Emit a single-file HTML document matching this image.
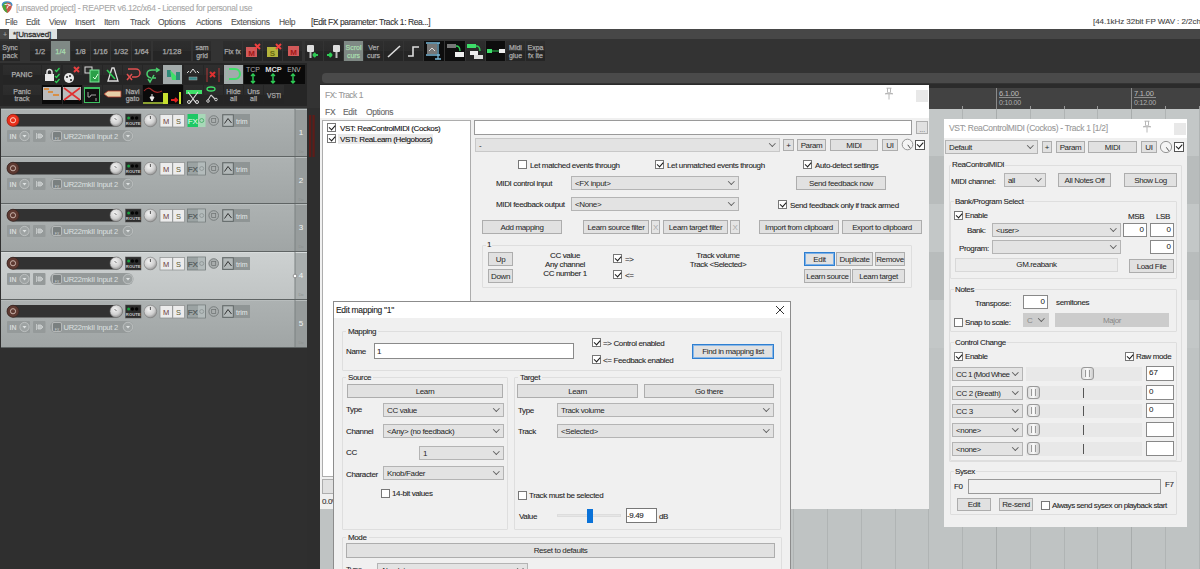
<!DOCTYPE html>
<html><head><meta charset="utf-8">
<style>
*{margin:0;padding:0;box-sizing:border-box}
html,body{width:1200px;height:569px;overflow:hidden;background:#2f2f2f;font-family:"Liberation Sans",sans-serif;position:relative}
div,span{position:absolute}
.t{font-size:8px;letter-spacing:-0.37px;line-height:11px;white-space:nowrap;color:#262626;-webkit-text-stroke-width:0.1px}
.btn{background:#e1e1e1;border:1px solid #adadad;font-size:8px;letter-spacing:-0.37px;line-height:13px;text-align:center;white-space:nowrap;color:#262626}
.dd{background:#e3e3e3;border:1px solid #b4b4b4;font-size:8px;letter-spacing:-0.37px;line-height:13.5px;white-space:nowrap;color:#262626;padding-left:3px}
.dd:after{content:"";position:absolute;right:4px;top:2.2px;width:3.6px;height:3.6px;border-right:1px solid #606060;border-bottom:1px solid #606060;transform:rotate(45deg)}
.cb{width:9px;height:9px;border:1px solid #777;background:#fff}
.cb.on:after{content:"";position:absolute;left:1px;top:1.2px;width:5px;height:2.6px;border-left:1.7px solid #1a1a1a;border-bottom:1.7px solid #1a1a1a;transform:rotate(-48deg)}
.gb{border:1px solid #dedede;border-radius:1px}
.tb{background:#fff;border:1px solid #7a7a7a}
.tbtn{background:#2b2b2b;color:#bdbdbd;font-size:8px;line-height:8px;text-align:center;letter-spacing:-0.2px}
.trk{background:linear-gradient(#aeb3b3,#a2a7a7)}
</style></head><body>

<!-- title + menu -->
<div style="left:0;top:0;width:1200px;height:29px;background:#fff"></div>
<svg style="position:absolute;left:1px;top:1px" width="12" height="13"><path d="M1.2 4.5 Q1.5 1 6 1 Q10.8 1 11 4.5 Q10.5 9 6.5 12 Q2 10 1.2 4.5Z" fill="#c8584a"/><path d="M1.2 4.5 Q1.5 1 6 1 Q4 4 5 7 Q6 10 6.5 12 Q2 10 1.2 4.5Z" fill="#46a83c"/><path d="M1.3 4.6 Q1.5 0.9 6 0.9 Q10.8 0.9 11 4.6" stroke="#3a8ec8" stroke-width="1.4" fill="none"/><path d="M3.5 3.6 Q7 2.6 9.5 4.2 Q6.2 4.2 6 7.5" stroke="#f4f4f4" stroke-width="0.9" fill="none"/></svg>
<span class="t" style="left:16px;top:3px;font-size:8.5px;letter-spacing:-0.3px;color:#a8a8a8">[unsaved project] - REAPER v6.12c/x64 - Licensed for personal use</span>
<span class="t" style="left:5px;top:17px;font-size:8.5px;letter-spacing:-0.3px;color:#555">File</span>
<span class="t" style="left:26px;top:17px;font-size:8.5px;letter-spacing:-0.3px;color:#555">Edit</span>
<span class="t" style="left:49px;top:17px;font-size:8.5px;letter-spacing:-0.3px;color:#555">View</span>
<span class="t" style="left:75px;top:17px;font-size:8.5px;letter-spacing:-0.3px;color:#555">Insert</span>
<span class="t" style="left:104px;top:17px;font-size:8.5px;letter-spacing:-0.3px;color:#555">Item</span>
<span class="t" style="left:130px;top:17px;font-size:8.5px;letter-spacing:-0.3px;color:#555">Track</span>
<span class="t" style="left:158px;top:17px;font-size:8.5px;letter-spacing:-0.3px;color:#555">Options</span>
<span class="t" style="left:196px;top:17px;font-size:8.5px;letter-spacing:-0.3px;color:#555">Actions</span>
<span class="t" style="left:231px;top:17px;font-size:8.5px;letter-spacing:-0.3px;color:#555">Extensions</span>
<span class="t" style="left:279px;top:17px;font-size:8.5px;letter-spacing:-0.3px;color:#555">Help</span>
<span class="t" style="left:311px;top:17px;font-size:8.5px;letter-spacing:-0.4px;color:#333">[Edit FX parameter: Track 1: Rea...]</span>
<span class="t" style="left:1093px;top:16px;font-size:8px;letter-spacing:-0.05px;color:#444">[44.1kHz 32bit FP WAV : 2/2ch</span>

<!-- tab band -->
<div style="left:0;top:29px;width:1200px;height:10px;background:#474747"></div>
<div style="left:9px;top:29px;width:48px;height:10px;background:#dfe2e2"></div>
<span class="t" style="left:13px;top:29px;font-size:8px;letter-spacing:-0.1px;color:#333;-webkit-text-stroke-width:0.3px">*[Unsaved]</span>
<span class="t" style="left:3px;top:28.5px;color:#aaa;font-size:7px">+</span>

<!-- toolbar area -->
<div style="left:0;top:39px;width:1200px;height:70px;background:#333"></div>
<div style="left:322px;top:73px;width:878px;height:10px;background:#4a4a4a;border-radius:4px 0 0 4px"></div>
<div style="left:320px;top:84px;width:880px;height:4px;background:#2b2b2b"></div>


<svg style="position:absolute;left:0;top:0" width="560" height="110" font-family="Liberation Sans"><defs><linearGradient id="tbg" x1="0" y1="0" x2="0" y2="1"><stop offset="0" stop-color="#2e2e2e"/><stop offset="0.5" stop-color="#2b2b2b"/><stop offset="0.5" stop-color="#252525"/><stop offset="1" stop-color="#252525"/></linearGradient></defs><rect x="0" y="63" width="307" height="43" fill="#262626"/><rect x="0" y="41" width="20" height="20" fill="url(#tbg)" /><text x="10.0" y="50" font-size="7" fill="#a8a8a8" stroke="#a8a8a8" stroke-width="0.25" text-anchor="middle" >Sync</text><text x="10.0" y="57.5" font-size="7" fill="#a8a8a8" stroke="#a8a8a8" stroke-width="0.25" text-anchor="middle" >pack</text><rect x="30" y="41" width="20" height="20" fill="url(#tbg)" /><text x="40.0" y="54" font-size="7.5" fill="#a8a8a8" stroke="#a8a8a8" stroke-width="0.25" text-anchor="middle" >1/2</text><rect x="51" y="41" width="19" height="20" fill="#7f8985" /><text x="60.5" y="54" font-size="7.5" fill="#a8dcae" stroke="#a8dcae" stroke-width="0.25" text-anchor="middle" >1/4</text><rect x="71" y="41" width="19" height="20" fill="url(#tbg)" /><text x="80.5" y="54" font-size="7.5" fill="#a8a8a8" stroke="#a8a8a8" stroke-width="0.25" text-anchor="middle" >1/8</text><rect x="91" y="41" width="19" height="20" fill="url(#tbg)" /><text x="100.5" y="54" font-size="7.5" fill="#a8a8a8" stroke="#a8a8a8" stroke-width="0.25" text-anchor="middle" >1/16</text><rect x="111" y="41" width="20" height="20" fill="url(#tbg)" /><text x="121.0" y="54" font-size="7.5" fill="#a8a8a8" stroke="#a8a8a8" stroke-width="0.25" text-anchor="middle" >1/32</text><rect x="132" y="41" width="19" height="20" fill="url(#tbg)" /><text x="141.5" y="54" font-size="7.5" fill="#a8a8a8" stroke="#a8a8a8" stroke-width="0.25" text-anchor="middle" >1/64</text><rect x="153" y="41" width="38" height="20" fill="url(#tbg)" /><text x="172.0" y="54" font-size="7.5" fill="#a8a8a8" stroke="#a8a8a8" stroke-width="0.25" text-anchor="middle" >1/128</text><rect x="193" y="41" width="18" height="20" fill="url(#tbg)" /><text x="202.0" y="50" font-size="7" fill="#a8a8a8" stroke="#a8a8a8" stroke-width="0.25" text-anchor="middle" >sam</text><text x="202.0" y="57.5" font-size="7" fill="#a8a8a8" stroke="#a8a8a8" stroke-width="0.25" text-anchor="middle" >grid</text><rect x="223" y="41" width="19" height="20" fill="url(#tbg)" /><text x="232.5" y="54" font-size="7" fill="#a8a8a8" stroke="#a8a8a8" stroke-width="0.25" text-anchor="middle" >Fix fx</text><rect x="243" y="41" width="19" height="20" fill="url(#tbg)" /><rect x="263" y="41" width="19" height="20" fill="url(#tbg)" /><rect x="283" y="41" width="19" height="20" fill="url(#tbg)" /><rect x="305" y="41" width="18" height="20" fill="url(#tbg)" /><rect x="324" y="41" width="19" height="20" fill="url(#tbg)" /><rect x="344" y="41" width="19" height="20" fill="#7f8985" /><text x="353.5" y="50" font-size="7" fill="#a8dcae" stroke="#a8dcae" stroke-width="0.25" text-anchor="middle" >Scrol</text><text x="353.5" y="57.5" font-size="7" fill="#a8dcae" stroke="#a8dcae" stroke-width="0.25" text-anchor="middle" >curs</text><rect x="364" y="41" width="19" height="20" fill="url(#tbg)" /><text x="373.5" y="50" font-size="7" fill="#a8a8a8" stroke="#a8a8a8" stroke-width="0.25" text-anchor="middle" >Ver</text><text x="373.5" y="57.5" font-size="7" fill="#a8a8a8" stroke="#a8a8a8" stroke-width="0.25" text-anchor="middle" >curs</text><rect x="384" y="41" width="19" height="20" fill="url(#tbg)" /><rect x="404" y="41" width="19" height="20" fill="url(#tbg)" /><rect x="424" y="41" width="20" height="20" fill="#0d0d0d" /><rect x="445" y="41" width="20" height="20" fill="#0d0d0d" /><rect x="466" y="41" width="19" height="20" fill="url(#tbg)" /><rect x="486" y="41" width="19" height="20" fill="#0d0d0d" /><rect x="506" y="41" width="19" height="20" fill="url(#tbg)" /><text x="515.5" y="50" font-size="7" fill="#a8a8a8" stroke="#a8a8a8" stroke-width="0.25" text-anchor="middle" >Midi</text><text x="515.5" y="57.5" font-size="7" fill="#a8a8a8" stroke="#a8a8a8" stroke-width="0.25" text-anchor="middle" >glue</text><rect x="526" y="41" width="19" height="20" fill="url(#tbg)" /><text x="535.5" y="50" font-size="7" fill="#a8a8a8" stroke="#a8a8a8" stroke-width="0.25" text-anchor="middle" >Expa</text><text x="535.5" y="57.5" font-size="7" fill="#a8a8a8" stroke="#a8a8a8" stroke-width="0.25" text-anchor="middle" >fx ite</text><rect x="3" y="65" width="38" height="19" fill="url(#tbg)" /><text x="22.0" y="76.5" font-size="7" fill="#b0b0b0" stroke="#b0b0b0" stroke-width="0.25" text-anchor="middle" >PANIC</text><rect x="42" y="65" width="19" height="19" fill="url(#tbg)" /><rect x="63" y="65" width="19" height="19" fill="url(#tbg)" /><rect x="83" y="65" width="19" height="19" fill="url(#tbg)" /><rect x="103" y="65" width="19" height="19" fill="url(#tbg)" /><rect x="123" y="65" width="19" height="19" fill="url(#tbg)" /><rect x="143" y="65" width="19" height="19" fill="url(#tbg)" /><rect x="163" y="65" width="19" height="19" fill="#a3abab" /><rect x="184" y="65" width="19" height="19" fill="url(#tbg)" /><rect x="204" y="65" width="19" height="19" fill="url(#tbg)" /><rect x="224" y="65" width="19" height="19" fill="#a3abab" /><rect x="244" y="65" width="61" height="19" fill="#0a0a0a" /><rect x="3" y="85" width="38" height="19" fill="url(#tbg)" /><text x="22.0" y="93.5" font-size="7" fill="#a8a8a8" stroke="#a8a8a8" stroke-width="0.25" text-anchor="middle" >Panic</text><text x="22.0" y="101" font-size="7" fill="#a8a8a8" stroke="#a8a8a8" stroke-width="0.25" text-anchor="middle" >track</text><rect x="42" y="85" width="20" height="19" fill="#0a0a0a" /><rect x="63" y="85" width="19" height="19" fill="#0a0a0a" /><rect x="83" y="85" width="19" height="19" fill="url(#tbg)" /><rect x="103" y="85" width="19" height="19" fill="url(#tbg)" /><rect x="123" y="85" width="19" height="19" fill="url(#tbg)" /><text x="132.5" y="93.5" font-size="7" fill="#a8a8a8" stroke="#a8a8a8" stroke-width="0.25" text-anchor="middle" >Navi</text><text x="132.5" y="101" font-size="7" fill="#a8a8a8" stroke="#a8a8a8" stroke-width="0.25" text-anchor="middle" >gato</text><rect x="143" y="85" width="20" height="19" fill="#0a0a0a" /><rect x="163" y="85" width="20" height="19" fill="#0a0a0a" /><rect x="184" y="85" width="19" height="19" fill="url(#tbg)" /><rect x="204" y="85" width="19" height="19" fill="url(#tbg)" /><rect x="224" y="85" width="19" height="19" fill="url(#tbg)" /><text x="233.5" y="93.5" font-size="7" fill="#a8a8a8" stroke="#a8a8a8" stroke-width="0.25" text-anchor="middle" >Hide</text><text x="233.5" y="101" font-size="7" fill="#a8a8a8" stroke="#a8a8a8" stroke-width="0.25" text-anchor="middle" >all</text><rect x="244" y="85" width="19" height="19" fill="url(#tbg)" /><text x="253.5" y="93.5" font-size="7" fill="#a8a8a8" stroke="#a8a8a8" stroke-width="0.25" text-anchor="middle" >Uns</text><text x="253.5" y="101" font-size="7" fill="#a8a8a8" stroke="#a8a8a8" stroke-width="0.25" text-anchor="middle" >all</text><rect x="264" y="85" width="20" height="19" fill="url(#tbg)" /><text x="274.0" y="97.5" font-size="6.5" fill="#a8a8a8" stroke="#a8a8a8" stroke-width="0.25" text-anchor="middle" >VSTi</text>
<!-- row1 icons -->
<rect x="246" y="47" width="11" height="10" fill="#d25a5a"/><text x="251.5" y="55.5" font-size="8" fill="#a01818" text-anchor="middle" font-weight="bold">M</text>
<path d="M255 44 l5 5 M260 44 l-5 5" stroke="#f04040" stroke-width="2"/>
<rect x="267" y="47" width="11" height="10" fill="#b4b43c"/><text x="272.5" y="55.5" font-size="8" fill="#6a6a10" text-anchor="middle" font-weight="bold">S</text>
<path d="M276 44 l5 5 M281 44 l-5 5" stroke="#f04040" stroke-width="2"/>
<rect x="288" y="46" width="11" height="10" fill="#d25a5a"/><text x="293.5" y="54.5" font-size="8" fill="#a01818" text-anchor="middle" font-weight="bold">M</text>
<rect x="307" y="45" width="7" height="7" fill="#ddd" rx="1"/><rect x="309.5" y="52" width="2" height="6" fill="#bbb"/><path d="M313 55 h5 M313 55 l2.5 -2 M313 55 l2.5 2" stroke="#2ecc55" stroke-width="2"/>
<rect x="333" y="45" width="7" height="7" fill="#ddd" rx="1"/><rect x="335.5" y="52" width="2" height="6" fill="#bbb"/><path d="M327 55 h5 M332 55 l-2.5 -2 M332 55 l-2.5 2" stroke="#2ecc55" stroke-width="2"/>
<path d="M388 57 L400 46" stroke="#ddd" stroke-width="1.6"/>
<path d="M408 56 h5 v-9 h6" stroke="#ddd" stroke-width="1.6" fill="none"/>
<rect x="427" y="44" width="10" height="10" fill="#777"/><path d="M429 51 l3 -3 l3 3" stroke="#ddd" fill="none"/><path d="M426 43 h14 M426 55 h14 M438 43 v16 M435 59 h6" stroke="#7ab8d8" stroke-width="1.3" fill="none"/>
<rect x="447" y="44" width="9" height="4" fill="#777"/><rect x="455" y="52" width="9" height="5" fill="#eee"/><path d="M456 46 q4 0 4 5" stroke="#2ecc55" stroke-width="1.3" fill="none"/>
<rect x="467" y="44" width="9" height="4" fill="#3ede6a"/><rect x="470" y="51" width="8" height="4" fill="#eee"/><rect x="474" y="55" width="9" height="4" fill="#ddd"/><path d="M476 46 q4 0 4 5" stroke="#2ecc55" stroke-width="1.3" fill="none"/>
<rect x="487" y="49" width="5" height="4" fill="#3ede6a"/><path d="M492 51 h7" stroke="#2ecc55"/><rect x="499" y="49" width="6" height="4" fill="#eee"/>
<!-- row2 icons -->
<rect x="45" y="74" width="9" height="7" fill="#e8e8e8"/><path d="M47 74 v-2 a2.5 2.5 0 0 1 5 0 v2" stroke="#e8e8e8" stroke-width="1.5" fill="none"/>
<path d="M55 70 l1.5 1.5 l3 -3.5 M55 76 l1.5 1.5 l3 -3.5 M55 81 l1.5 1.5 l3 -3.5" stroke="#2ecc55" stroke-width="1.3" fill="none"/>
<circle cx="69" cy="78" r="5" fill="#e8e8e8"/><circle cx="67" cy="77" r="1" fill="#222"/><circle cx="70" cy="76" r="1" fill="#222"/><circle cx="71" cy="80" r="1" fill="#222"/>
<path d="M74 67 l5 5 M79 67 l-5 5" stroke="#e84040" stroke-width="2"/>
<rect x="85" y="67" width="7" height="6" fill="none" stroke="#ddd"/><rect x="90" y="70" width="9" height="12" fill="#2aa048" stroke="#7de89a"/><path d="M93 77 l2 2 l3 -5" stroke="#dfd" fill="none"/>
<path d="M108 81 l4 -13 h2 l4 13 z" fill="none" stroke="#ddd" stroke-width="1.3"/><path d="M107 70 l8 9" stroke="#2ecc55" stroke-width="1.6"/>
<path d="M128 69 h8 a4 4 0 0 1 0 8 h-4" stroke="#e05050" stroke-width="1.5" fill="none"/><path d="M127 74 l5 6 M132 74 l-5 6" stroke="#e05050" stroke-width="1.5"/>
<path d="M159 70 h-7 q-5 0 -5 4 q0 3 4 4 M156 68 l3 2 l-3 2 M148 79 l2 3 l4 -7 M153 78 h3" stroke="#4ad06e" stroke-width="1.5" fill="none"/>
<rect x="167" y="70" width="4" height="7" fill="#2f8a7a"/><rect x="176" y="72" width="4" height="8" fill="#2f8a7a"/><path d="M170 70 l6 6 v4 h-4 z" fill="#3ee068"/>
<path d="M187 73 l2 -2 M199 73 l-2 -2 M190 73 l3 -4 l3 4" stroke="#ddd" fill="none"/><rect x="189" y="77" width="8" height="3" fill="#3a8a8a" stroke="#aaa" stroke-width="0.5"/>
<path d="M207 68 v14 M219 68 v14" stroke="#b03838" stroke-width="1"/><path d="M210 72 l5 5 M215 72 l-5 5" stroke="#e03030" stroke-width="2"/>
<path d="M229 69 h6 a5 5 0 0 1 0 10 h-6" stroke="#3ee068" stroke-width="2" fill="none"/><path d="M227 68 v13" stroke="#8ac8a0" stroke-dasharray="1 1"/>
<text x="253" y="72" font-size="7" fill="#aaa" text-anchor="middle">TCP</text><text x="273.5" y="72" font-size="7.5" fill="#ddd" text-anchor="middle" font-weight="bold">MCP</text><text x="294" y="72" font-size="6.5" fill="#bbb" text-anchor="middle">ENV</text>
<path d="M253 74 v9 M251 76 l2 -2 l2 2 M251 81 l2 2 l2 -2" stroke="#2ecc55" stroke-width="1.4" fill="none"/>
<path d="M273 74 v9 M271 76 l2 -2 l2 2 M271 81 l2 2 l2 -2" stroke="#2ecc55" stroke-width="1.4" fill="none"/>
<path d="M293 74 v9 M291 76 l2 -2 l2 2 M291 81 l2 2 l2 -2" stroke="#2ecc55" stroke-width="1.4" fill="none"/>
<!-- row3 icons -->
<rect x="43" y="87" width="18" height="13" fill="#bcbcbc"/><path d="M44 89 h5 M48 92 h5 M53 95 h6 M50 92 h3" stroke="#e08020" stroke-width="1.3"/>
<rect x="63" y="87" width="18" height="13" fill="#bcbcbc"/><path d="M64 88 l16 12 M80 88 l-16 12" stroke="#e03030" stroke-width="1.6"/>
<rect x="84.5" y="87.5" width="15" height="15" fill="#111" stroke="#3ec060"/><rect x="85" y="87" width="15" height="2" fill="#3ec060"/><path d="M88 92 v5 h2 l1 -2 h5 M96 98 v3" stroke="#ccc" stroke-width="0.8" fill="none"/>
<path d="M104 94 l4 -3 h13 v6 h-13 z" fill="#e8d0a8" stroke="#b03828" stroke-width="0.8"/>
<path d="M144 91 q4 -5 8 -1 t10 1" stroke="#a02828" stroke-width="1.2" fill="none"/><path d="M150 97 l2 4 l2 -4 z M152 94 v3" fill="#eee" stroke="#eee"/><rect x="143" y="102" width="20" height="2" fill="#8aa030"/>
<rect x="163" y="93" width="5" height="11" fill="#c8e030"/><path d="M171 100 h6 M175 98 l2 2 l-2 2" stroke="#e02020" stroke-width="2" fill="none"/><rect x="179" y="92" width="2" height="12" fill="#c8e030"/>
<rect x="186" y="90" width="16" height="4" fill="#3ee068"/><path d="M190 103 l8 -11 M196 103 l-8 -11" stroke="#ddd" stroke-width="1.1"/><circle cx="189" cy="102" r="1.5" fill="none" stroke="#ddd"/><circle cx="197" cy="102" r="1.5" fill="none" stroke="#ddd"/>
<ellipse cx="211" cy="89" rx="4" ry="2" fill="none" stroke="#3ee068" stroke-width="1.3"/><path d="M211 95 l-3 5 M211 95 l4 4" stroke="#ccc" stroke-width="1.1"/><circle cx="208" cy="101" r="1.3" fill="none" stroke="#ccc"/><circle cx="216" cy="99.5" r="1.3" fill="none" stroke="#ccc"/>
</svg>
<!-- arrange bg -->
<svg style="position:absolute;left:0;top:0" width="1200" height="569" font-family="Liberation Sans"><rect x="320" y="88" width="880" height="21" fill="#424242"/><rect x="320" y="109" width="880" height="47" fill="#c3c7c7"/><rect x="320" y="156" width="880" height="48" fill="#b8bcbc"/><rect x="320" y="204" width="880" height="48" fill="#c3c7c7"/><rect x="320" y="252" width="880" height="48" fill="#b8bcbc"/><rect x="320" y="300" width="880" height="48" fill="#c3c7c7"/><rect x="320" y="348" width="880" height="221" fill="#bfc3c3"/><rect x="354" y="109" width="1" height="460" fill="#b0b4b4"/><rect x="354" y="106" width="1" height="3" fill="#999"/><rect x="388" y="109" width="1" height="460" fill="#b0b4b4"/><rect x="388" y="106" width="1" height="3" fill="#999"/><rect x="421" y="109" width="1" height="460" fill="#b0b4b4"/><rect x="421" y="106" width="1" height="3" fill="#999"/><rect x="455" y="109" width="1" height="460" fill="#b0b4b4"/><rect x="455" y="106" width="1" height="3" fill="#999"/><rect x="489" y="109" width="1" height="460" fill="#b0b4b4"/><rect x="489" y="106" width="1" height="3" fill="#999"/><rect x="523" y="109" width="1" height="460" fill="#b0b4b4"/><rect x="523" y="106" width="1" height="3" fill="#999"/><rect x="557" y="109" width="1" height="460" fill="#b0b4b4"/><rect x="557" y="106" width="1" height="3" fill="#999"/><rect x="590" y="109" width="1" height="460" fill="#b0b4b4"/><rect x="590" y="106" width="1" height="3" fill="#999"/><rect x="624" y="109" width="1" height="460" fill="#b0b4b4"/><rect x="624" y="106" width="1" height="3" fill="#999"/><rect x="658" y="109" width="1" height="460" fill="#b0b4b4"/><rect x="658" y="106" width="1" height="3" fill="#999"/><rect x="692" y="109" width="1" height="460" fill="#b0b4b4"/><rect x="692" y="106" width="1" height="3" fill="#999"/><rect x="726" y="109" width="1" height="460" fill="#b0b4b4"/><rect x="726" y="106" width="1" height="3" fill="#999"/><rect x="759" y="109" width="1" height="460" fill="#b0b4b4"/><rect x="759" y="106" width="1" height="3" fill="#999"/><rect x="793" y="109" width="1" height="460" fill="#b0b4b4"/><rect x="793" y="106" width="1" height="3" fill="#999"/><rect x="827" y="109" width="1" height="460" fill="#b0b4b4"/><rect x="827" y="106" width="1" height="3" fill="#999"/><rect x="861" y="109" width="1" height="460" fill="#b0b4b4"/><rect x="861" y="106" width="1" height="3" fill="#999"/><rect x="895" y="109" width="1" height="460" fill="#b0b4b4"/><rect x="895" y="106" width="1" height="3" fill="#999"/><rect x="928" y="109" width="1" height="460" fill="#b0b4b4"/><rect x="928" y="106" width="1" height="3" fill="#999"/><rect x="962" y="109" width="1" height="460" fill="#b0b4b4"/><rect x="962" y="106" width="1" height="3" fill="#999"/><rect x="996" y="109" width="1" height="460" fill="#a8acac"/><rect x="996" y="106" width="1" height="3" fill="#999"/><rect x="1030" y="109" width="1" height="460" fill="#b0b4b4"/><rect x="1030" y="106" width="1" height="3" fill="#999"/><rect x="1064" y="109" width="1" height="460" fill="#b0b4b4"/><rect x="1064" y="106" width="1" height="3" fill="#999"/><rect x="1097" y="109" width="1" height="460" fill="#b0b4b4"/><rect x="1097" y="106" width="1" height="3" fill="#999"/><rect x="1131" y="109" width="1" height="460" fill="#a8acac"/><rect x="1131" y="106" width="1" height="3" fill="#999"/><rect x="1165" y="109" width="1" height="460" fill="#b0b4b4"/><rect x="1165" y="106" width="1" height="3" fill="#999"/><rect x="1199" y="109" width="1" height="460" fill="#b0b4b4"/><rect x="1199" y="106" width="1" height="3" fill="#999"/><rect x="996" y="88" width="1" height="21" fill="#8a8a8a"/><text x="999" y="96" font-size="7.5" fill="#bdbdbd" letter-spacing="-0.2">6.1.00</text><rect x="999" y="97" width="22" height="0.8" fill="#a0a0a0"/><text x="999" y="105" font-size="7" fill="#b0b0b0" letter-spacing="-0.2">0:10.00</text><rect x="1131" y="88" width="1" height="21" fill="#8a8a8a"/><text x="1134" y="96" font-size="7.5" fill="#bdbdbd" letter-spacing="-0.2">7.1.00</text><rect x="1134" y="97" width="22" height="0.8" fill="#a0a0a0"/><text x="1134" y="105" font-size="7" fill="#b0b0b0" letter-spacing="-0.2">0:12.00</text></svg>

<!-- track panel area -->
<div style="left:0;top:108px;width:320px;height:461px;background:#2f2f2f"></div>
<svg style="position:absolute;left:0;top:0" width="320" height="569" font-family="Liberation Sans"><defs>
<linearGradient id="gtrk" x1="0" y1="0" x2="0" y2="1"><stop offset="0" stop-color="#adb2b2"/><stop offset="1" stop-color="#a0a5a5"/></linearGradient>
<linearGradient id="gsel" x1="0" y1="0" x2="0" y2="1"><stop offset="0" stop-color="#cdd1d1"/><stop offset="1" stop-color="#c0c4c4"/></linearGradient>
<radialGradient id="gknob" cx="0.4" cy="0.35" r="0.7"><stop offset="0" stop-color="#f4f4f4"/><stop offset="0.6" stop-color="#cfcfcf"/><stop offset="1" stop-color="#8a8a8a"/></radialGradient>
</defs><rect x="1" y="109" width="294" height="47" fill="url(#gtrk)"/><rect x="295" y="109" width="12" height="47" fill="#979c9c"/><rect x="1" y="108" width="306" height="1" fill="#5f6464"/><rect x="1" y="109" width="306" height="1" fill="#b8bdbd"/><rect x="294.5" y="109" width="1" height="47" fill="#7d8282"/><rect x="7" y="114" width="115.5" height="12.5" rx="6.2" fill="#323232"/><circle cx="13" cy="120.25" r="6" fill="#e8301c" stroke="#b02010" stroke-width="0.7"/><circle cx="13" cy="120.25" r="2.6" fill="none" stroke="#ffd0c0" stroke-width="1"/><circle cx="116.3" cy="120.25" r="6.3" fill="url(#gknob)" stroke="#707070" stroke-width="0.6"/><path d="M114.5 118 l2 2" stroke="#555" stroke-width="0.8"/><rect x="125.5" y="114" width="15.5" height="13" fill="#2c2c2c" stroke="#555" stroke-width="0.5"/><circle cx="128.6" cy="118" r="1.5" fill="#1aa040"/><circle cx="132.4" cy="118" r="1.7" fill="#050505"/><circle cx="136.6" cy="118" r="1.7" fill="#050505"/><text x="133.2" y="125" font-size="4.2" fill="#c8c8c8" text-anchor="middle" font-weight="bold">ROUTE</text><circle cx="150.4" cy="120.5" r="6.3" fill="url(#gknob)" stroke="#7a7a7a" stroke-width="0.6"/><path d="M150.4 116 v3" stroke="#444" stroke-width="0.9"/><rect x="160" y="114.5" width="12.5" height="12.5" fill="#ececec" stroke="#8a8e8e" stroke-width="0.7"/><rect x="172.8" y="114.5" width="11.7" height="12.5" fill="#ececec" stroke="#8a8e8e" stroke-width="0.7"/><text x="166.2" y="123.8" font-size="7.5" fill="#6a3a3a" text-anchor="middle">M</text><text x="178.6" y="123.8" font-size="7.5" fill="#5e5a30" text-anchor="middle">S</text><rect x="187.5" y="114" width="10.5" height="13" fill="#1ec864"/><rect x="198" y="114" width="7.5" height="13" fill="#a8d8b8"/><text x="192.8" y="123.8" font-size="8" fill="#f0fff0" text-anchor="middle">FX</text><circle cx="201.7" cy="120.5" r="2" fill="none" stroke="#3aa860" stroke-width="0.8"/><circle cx="213.7" cy="120.5" r="4.8" fill="#a9aeae" stroke="#737878" stroke-width="0.9"/><rect x="211.7" y="118.5" width="4" height="4" fill="none" stroke="#6c7070" stroke-width="0.7"/><rect x="222" y="114" width="28" height="13" fill="#8f9595"/><rect x="222.8" y="114.8" width="10.5" height="11.5" fill="#b2b8b8" stroke="#5a6060" stroke-width="0.9"/><path d="M224.5 123.5 l3.5 -5 l3.5 4.5" stroke="#222" stroke-width="0.9" fill="none"/><text x="236" y="123.5" font-size="7" fill="#e4e8e8">trim</text><text x="301" y="135" font-size="8" fill="#eef2f2" text-anchor="middle">1</text><text x="301" y="153" font-size="4" fill="#8a8e8e" text-anchor="middle">Do</text><rect x="7" y="130" width="23" height="12" rx="1" fill="#959a9a"/><text x="9.5" y="139" font-size="7" fill="#d4d8d8" font-weight="bold">IN</text><circle cx="24.5" cy="136" r="4.6" fill="#9ea3a3" stroke="#c4c8c8" stroke-width="0.8"/><path d="M22.5 135 h4 l-2 2.5 z" fill="#dfe2e2"/><rect x="33" y="130" width="12.5" height="12" rx="1" fill="#959a9a"/><path d="M36.5 133 v6 M38 134 h3 l2 2 l-2 2 h-3z" stroke="#cfd3d3" stroke-width="0.8" fill="#bfc3c3"/><rect x="50" y="130" width="83.5" height="12" rx="6" fill="#959a9a"/><rect x="52.5" y="131.5" width="9" height="9" rx="1.5" fill="#7a8080" stroke="#c8cccc" stroke-width="0.7"/><text x="57" y="139.5" font-size="3.5" fill="#d0d4d4" text-anchor="middle">FX</text><text x="63.5" y="139" font-size="7.5" fill="#dce0e0" letter-spacing="-0.25">UR22mkII Input 2</text><circle cx="128" cy="136" r="4.8" fill="#9ea3a3" stroke="#c4c8c8" stroke-width="0.8"/><path d="M126 135 h4 l-2 2.5 z" fill="#dfe2e2"/><rect x="1" y="157" width="294" height="47" fill="url(#gtrk)"/><rect x="295" y="157" width="12" height="47" fill="#979c9c"/><rect x="1" y="156" width="306" height="1" fill="#5f6464"/><rect x="1" y="157" width="306" height="1" fill="#b8bdbd"/><rect x="294.5" y="157" width="1" height="47" fill="#7d8282"/><rect x="7" y="162" width="115.5" height="12.5" rx="6.2" fill="#323232"/><circle cx="13" cy="168.25" r="6" fill="#5e3a32" stroke="#3a2420" stroke-width="0.7"/><circle cx="13" cy="168.25" r="2.6" fill="none" stroke="#c8b0a8" stroke-width="1"/><circle cx="116.3" cy="168.25" r="6.3" fill="url(#gknob)" stroke="#707070" stroke-width="0.6"/><path d="M114.5 166 l2 2" stroke="#555" stroke-width="0.8"/><rect x="125.5" y="162" width="15.5" height="13" fill="#2c2c2c" stroke="#555" stroke-width="0.5"/><circle cx="128.6" cy="166" r="1.5" fill="#1aa040"/><circle cx="132.4" cy="166" r="1.7" fill="#050505"/><circle cx="136.6" cy="166" r="1.7" fill="#050505"/><text x="133.2" y="173" font-size="4.2" fill="#c8c8c8" text-anchor="middle" font-weight="bold">ROUTE</text><circle cx="150.4" cy="168.5" r="6.3" fill="url(#gknob)" stroke="#7a7a7a" stroke-width="0.6"/><path d="M150.4 164 v3" stroke="#444" stroke-width="0.9"/><rect x="160" y="162.5" width="12.5" height="12.5" fill="#ececec" stroke="#8a8e8e" stroke-width="0.7"/><rect x="172.8" y="162.5" width="11.7" height="12.5" fill="#ececec" stroke="#8a8e8e" stroke-width="0.7"/><text x="166.2" y="171.8" font-size="7.5" fill="#6a3a3a" text-anchor="middle">M</text><text x="178.6" y="171.8" font-size="7.5" fill="#5e5a30" text-anchor="middle">S</text><rect x="187.5" y="162" width="18" height="13" fill="#9ba3a3" stroke="#737a7a" stroke-width="0.8"/><rect x="198" y="162.5" width="7" height="12" fill="#b3bbbb"/><text x="192.8" y="172" font-size="8" fill="#4e5656" stroke="#4e5656" stroke-width="0.2" text-anchor="middle">FX</text><circle cx="201.7" cy="168.5" r="2" fill="none" stroke="#8a9292" stroke-width="0.8"/><circle cx="213.7" cy="168.5" r="4.8" fill="#a9aeae" stroke="#737878" stroke-width="0.9"/><rect x="211.7" y="166.5" width="4" height="4" fill="none" stroke="#6c7070" stroke-width="0.7"/><rect x="222" y="162" width="28" height="13" fill="#8f9595"/><rect x="222.8" y="162.8" width="10.5" height="11.5" fill="#b2b8b8" stroke="#5a6060" stroke-width="0.9"/><path d="M224.5 171.5 l3.5 -5 l3.5 4.5" stroke="#222" stroke-width="0.9" fill="none"/><text x="236" y="171.5" font-size="7" fill="#e4e8e8">trim</text><text x="301" y="183" font-size="8" fill="#eef2f2" text-anchor="middle">2</text><text x="301" y="201" font-size="4" fill="#8a8e8e" text-anchor="middle">Do</text><rect x="7" y="178" width="23" height="12" rx="1" fill="#959a9a"/><text x="9.5" y="187" font-size="7" fill="#d4d8d8" font-weight="bold">IN</text><circle cx="24.5" cy="184" r="4.6" fill="#9ea3a3" stroke="#c4c8c8" stroke-width="0.8"/><path d="M22.5 183 h4 l-2 2.5 z" fill="#dfe2e2"/><rect x="33" y="178" width="12.5" height="12" rx="1" fill="#959a9a"/><path d="M36.5 181 v6 M38 182 h3 l2 2 l-2 2 h-3z" stroke="#cfd3d3" stroke-width="0.8" fill="#bfc3c3"/><rect x="50" y="178" width="83.5" height="12" rx="6" fill="#959a9a"/><rect x="52.5" y="179.5" width="9" height="9" rx="1.5" fill="#7a8080" stroke="#c8cccc" stroke-width="0.7"/><text x="57" y="187.5" font-size="3.5" fill="#d0d4d4" text-anchor="middle">FX</text><text x="63.5" y="187" font-size="7.5" fill="#dce0e0" letter-spacing="-0.25">UR22mkII Input 2</text><circle cx="128" cy="184" r="4.8" fill="#9ea3a3" stroke="#c4c8c8" stroke-width="0.8"/><path d="M126 183 h4 l-2 2.5 z" fill="#dfe2e2"/><rect x="1" y="204" width="294" height="47" fill="url(#gtrk)"/><rect x="295" y="204" width="12" height="47" fill="#979c9c"/><rect x="1" y="203" width="306" height="1" fill="#5f6464"/><rect x="1" y="204" width="306" height="1" fill="#b8bdbd"/><rect x="294.5" y="204" width="1" height="47" fill="#7d8282"/><rect x="7" y="209" width="115.5" height="12.5" rx="6.2" fill="#323232"/><circle cx="13" cy="215.25" r="6" fill="#5e3a32" stroke="#3a2420" stroke-width="0.7"/><circle cx="13" cy="215.25" r="2.6" fill="none" stroke="#c8b0a8" stroke-width="1"/><circle cx="116.3" cy="215.25" r="6.3" fill="url(#gknob)" stroke="#707070" stroke-width="0.6"/><path d="M114.5 213 l2 2" stroke="#555" stroke-width="0.8"/><rect x="125.5" y="209" width="15.5" height="13" fill="#2c2c2c" stroke="#555" stroke-width="0.5"/><circle cx="128.6" cy="213" r="1.5" fill="#1aa040"/><circle cx="132.4" cy="213" r="1.7" fill="#050505"/><circle cx="136.6" cy="213" r="1.7" fill="#050505"/><text x="133.2" y="220" font-size="4.2" fill="#c8c8c8" text-anchor="middle" font-weight="bold">ROUTE</text><circle cx="150.4" cy="215.5" r="6.3" fill="url(#gknob)" stroke="#7a7a7a" stroke-width="0.6"/><path d="M150.4 211 v3" stroke="#444" stroke-width="0.9"/><rect x="160" y="209.5" width="12.5" height="12.5" fill="#ececec" stroke="#8a8e8e" stroke-width="0.7"/><rect x="172.8" y="209.5" width="11.7" height="12.5" fill="#ececec" stroke="#8a8e8e" stroke-width="0.7"/><text x="166.2" y="218.8" font-size="7.5" fill="#6a3a3a" text-anchor="middle">M</text><text x="178.6" y="218.8" font-size="7.5" fill="#5e5a30" text-anchor="middle">S</text><rect x="187.5" y="209" width="18" height="13" fill="#9ba3a3" stroke="#737a7a" stroke-width="0.8"/><rect x="198" y="209.5" width="7" height="12" fill="#b3bbbb"/><text x="192.8" y="219" font-size="8" fill="#4e5656" stroke="#4e5656" stroke-width="0.2" text-anchor="middle">FX</text><circle cx="201.7" cy="215.5" r="2" fill="none" stroke="#8a9292" stroke-width="0.8"/><circle cx="213.7" cy="215.5" r="4.8" fill="#a9aeae" stroke="#737878" stroke-width="0.9"/><rect x="211.7" y="213.5" width="4" height="4" fill="none" stroke="#6c7070" stroke-width="0.7"/><rect x="222" y="209" width="28" height="13" fill="#8f9595"/><rect x="222.8" y="209.8" width="10.5" height="11.5" fill="#b2b8b8" stroke="#5a6060" stroke-width="0.9"/><path d="M224.5 218.5 l3.5 -5 l3.5 4.5" stroke="#222" stroke-width="0.9" fill="none"/><text x="236" y="218.5" font-size="7" fill="#e4e8e8">trim</text><text x="301" y="230" font-size="8" fill="#eef2f2" text-anchor="middle">3</text><text x="301" y="248" font-size="4" fill="#8a8e8e" text-anchor="middle">Do</text><rect x="7" y="225" width="23" height="12" rx="1" fill="#959a9a"/><text x="9.5" y="234" font-size="7" fill="#d4d8d8" font-weight="bold">IN</text><circle cx="24.5" cy="231" r="4.6" fill="#9ea3a3" stroke="#c4c8c8" stroke-width="0.8"/><path d="M22.5 230 h4 l-2 2.5 z" fill="#dfe2e2"/><rect x="33" y="225" width="12.5" height="12" rx="1" fill="#959a9a"/><path d="M36.5 228 v6 M38 229 h3 l2 2 l-2 2 h-3z" stroke="#cfd3d3" stroke-width="0.8" fill="#bfc3c3"/><rect x="50" y="225" width="83.5" height="12" rx="6" fill="#959a9a"/><rect x="52.5" y="226.5" width="9" height="9" rx="1.5" fill="#7a8080" stroke="#c8cccc" stroke-width="0.7"/><text x="57" y="234.5" font-size="3.5" fill="#d0d4d4" text-anchor="middle">FX</text><text x="63.5" y="234" font-size="7.5" fill="#dce0e0" letter-spacing="-0.25">UR22mkII Input 2</text><circle cx="128" cy="231" r="4.8" fill="#9ea3a3" stroke="#c4c8c8" stroke-width="0.8"/><path d="M126 230 h4 l-2 2.5 z" fill="#dfe2e2"/><rect x="1" y="252" width="294" height="47" fill="url(#gsel)"/><rect x="295" y="252" width="12" height="47" fill="#a9aeae"/><rect x="1" y="251" width="306" height="1" fill="#5f6464"/><rect x="1" y="252" width="306" height="1" fill="#d8dcdc"/><rect x="294.5" y="252" width="1" height="47" fill="#7d8282"/><rect x="7" y="257" width="115.5" height="12.5" rx="6.2" fill="#323232"/><circle cx="13" cy="263.25" r="6" fill="#5e3a32" stroke="#3a2420" stroke-width="0.7"/><circle cx="13" cy="263.25" r="2.6" fill="none" stroke="#c8b0a8" stroke-width="1"/><circle cx="116.3" cy="263.25" r="6.3" fill="url(#gknob)" stroke="#707070" stroke-width="0.6"/><path d="M114.5 261 l2 2" stroke="#555" stroke-width="0.8"/><rect x="125.5" y="257" width="15.5" height="13" fill="#2c2c2c" stroke="#555" stroke-width="0.5"/><circle cx="128.6" cy="261" r="1.5" fill="#1aa040"/><circle cx="132.4" cy="261" r="1.7" fill="#050505"/><circle cx="136.6" cy="261" r="1.7" fill="#050505"/><text x="133.2" y="268" font-size="4.2" fill="#c8c8c8" text-anchor="middle" font-weight="bold">ROUTE</text><circle cx="150.4" cy="263.5" r="6.3" fill="url(#gknob)" stroke="#7a7a7a" stroke-width="0.6"/><path d="M150.4 259 v3" stroke="#444" stroke-width="0.9"/><rect x="160" y="257.5" width="12.5" height="12.5" fill="#ececec" stroke="#8a8e8e" stroke-width="0.7"/><rect x="172.8" y="257.5" width="11.7" height="12.5" fill="#ececec" stroke="#8a8e8e" stroke-width="0.7"/><text x="166.2" y="266.8" font-size="7.5" fill="#6a3a3a" text-anchor="middle">M</text><text x="178.6" y="266.8" font-size="7.5" fill="#5e5a30" text-anchor="middle">S</text><rect x="187.5" y="257" width="18" height="13" fill="#9ba3a3" stroke="#737a7a" stroke-width="0.8"/><rect x="198" y="257.5" width="7" height="12" fill="#b3bbbb"/><text x="192.8" y="267" font-size="8" fill="#4e5656" stroke="#4e5656" stroke-width="0.2" text-anchor="middle">FX</text><circle cx="201.7" cy="263.5" r="2" fill="none" stroke="#8a9292" stroke-width="0.8"/><circle cx="213.7" cy="263.5" r="4.8" fill="#a9aeae" stroke="#737878" stroke-width="0.9"/><rect x="211.7" y="261.5" width="4" height="4" fill="none" stroke="#6c7070" stroke-width="0.7"/><rect x="222" y="257" width="28" height="13" fill="#8f9595"/><rect x="222.8" y="257.8" width="10.5" height="11.5" fill="#b2b8b8" stroke="#5a6060" stroke-width="0.9"/><path d="M224.5 266.5 l3.5 -5 l3.5 4.5" stroke="#222" stroke-width="0.9" fill="none"/><text x="236" y="266.5" font-size="7" fill="#e4e8e8">trim</text><text x="301" y="278" font-size="8" fill="#eef2f2" text-anchor="middle">4</text><text x="301" y="296" font-size="4" fill="#8a8e8e" text-anchor="middle">Do</text><rect x="7" y="273" width="23" height="12" rx="1" fill="#959a9a"/><text x="9.5" y="282" font-size="7" fill="#d4d8d8" font-weight="bold">IN</text><circle cx="24.5" cy="279" r="4.6" fill="#9ea3a3" stroke="#c4c8c8" stroke-width="0.8"/><path d="M22.5 278 h4 l-2 2.5 z" fill="#dfe2e2"/><rect x="33" y="273" width="12.5" height="12" rx="1" fill="#959a9a"/><path d="M36.5 276 v6 M38 277 h3 l2 2 l-2 2 h-3z" stroke="#cfd3d3" stroke-width="0.8" fill="#bfc3c3"/><rect x="50" y="273" width="83.5" height="12" rx="6" fill="#959a9a"/><rect x="52.5" y="274.5" width="9" height="9" rx="1.5" fill="#7a8080" stroke="#c8cccc" stroke-width="0.7"/><text x="57" y="282.5" font-size="3.5" fill="#d0d4d4" text-anchor="middle">FX</text><text x="63.5" y="282" font-size="7.5" fill="#dce0e0" letter-spacing="-0.25">UR22mkII Input 2</text><circle cx="128" cy="279" r="4.8" fill="#9ea3a3" stroke="#c4c8c8" stroke-width="0.8"/><path d="M126 278 h4 l-2 2.5 z" fill="#dfe2e2"/><circle cx="295" cy="276" r="1.8" fill="#fff" stroke="#666" stroke-width="0.6"/><rect x="1" y="300" width="294" height="47" fill="url(#gtrk)"/><rect x="295" y="300" width="12" height="47" fill="#979c9c"/><rect x="1" y="299" width="306" height="1" fill="#5f6464"/><rect x="1" y="300" width="306" height="1" fill="#b8bdbd"/><rect x="294.5" y="300" width="1" height="47" fill="#7d8282"/><rect x="7" y="305" width="115.5" height="12.5" rx="6.2" fill="#323232"/><circle cx="13" cy="311.25" r="6" fill="#5e3a32" stroke="#3a2420" stroke-width="0.7"/><circle cx="13" cy="311.25" r="2.6" fill="none" stroke="#c8b0a8" stroke-width="1"/><circle cx="116.3" cy="311.25" r="6.3" fill="url(#gknob)" stroke="#707070" stroke-width="0.6"/><path d="M114.5 309 l2 2" stroke="#555" stroke-width="0.8"/><rect x="125.5" y="305" width="15.5" height="13" fill="#2c2c2c" stroke="#555" stroke-width="0.5"/><circle cx="128.6" cy="309" r="1.5" fill="#1aa040"/><circle cx="132.4" cy="309" r="1.7" fill="#050505"/><circle cx="136.6" cy="309" r="1.7" fill="#050505"/><text x="133.2" y="316" font-size="4.2" fill="#c8c8c8" text-anchor="middle" font-weight="bold">ROUTE</text><circle cx="150.4" cy="311.5" r="6.3" fill="url(#gknob)" stroke="#7a7a7a" stroke-width="0.6"/><path d="M150.4 307 v3" stroke="#444" stroke-width="0.9"/><rect x="160" y="305.5" width="12.5" height="12.5" fill="#ececec" stroke="#8a8e8e" stroke-width="0.7"/><rect x="172.8" y="305.5" width="11.7" height="12.5" fill="#ececec" stroke="#8a8e8e" stroke-width="0.7"/><text x="166.2" y="314.8" font-size="7.5" fill="#6a3a3a" text-anchor="middle">M</text><text x="178.6" y="314.8" font-size="7.5" fill="#5e5a30" text-anchor="middle">S</text><rect x="187.5" y="305" width="18" height="13" fill="#9ba3a3" stroke="#737a7a" stroke-width="0.8"/><rect x="198" y="305.5" width="7" height="12" fill="#b3bbbb"/><text x="192.8" y="315" font-size="8" fill="#4e5656" stroke="#4e5656" stroke-width="0.2" text-anchor="middle">FX</text><circle cx="201.7" cy="311.5" r="2" fill="none" stroke="#8a9292" stroke-width="0.8"/><circle cx="213.7" cy="311.5" r="4.8" fill="#a9aeae" stroke="#737878" stroke-width="0.9"/><rect x="211.7" y="309.5" width="4" height="4" fill="none" stroke="#6c7070" stroke-width="0.7"/><rect x="222" y="305" width="28" height="13" fill="#8f9595"/><rect x="222.8" y="305.8" width="10.5" height="11.5" fill="#b2b8b8" stroke="#5a6060" stroke-width="0.9"/><path d="M224.5 314.5 l3.5 -5 l3.5 4.5" stroke="#222" stroke-width="0.9" fill="none"/><text x="236" y="314.5" font-size="7" fill="#e4e8e8">trim</text><text x="301" y="326" font-size="8" fill="#eef2f2" text-anchor="middle">5</text><text x="301" y="344" font-size="4" fill="#8a8e8e" text-anchor="middle">Do</text><rect x="7" y="321" width="23" height="12" rx="1" fill="#959a9a"/><text x="9.5" y="330" font-size="7" fill="#d4d8d8" font-weight="bold">IN</text><circle cx="24.5" cy="327" r="4.6" fill="#9ea3a3" stroke="#c4c8c8" stroke-width="0.8"/><path d="M22.5 326 h4 l-2 2.5 z" fill="#dfe2e2"/><rect x="33" y="321" width="12.5" height="12" rx="1" fill="#959a9a"/><path d="M36.5 324 v6 M38 325 h3 l2 2 l-2 2 h-3z" stroke="#cfd3d3" stroke-width="0.8" fill="#bfc3c3"/><rect x="50" y="321" width="83.5" height="12" rx="6" fill="#959a9a"/><rect x="52.5" y="322.5" width="9" height="9" rx="1.5" fill="#7a8080" stroke="#c8cccc" stroke-width="0.7"/><text x="57" y="330.5" font-size="3.5" fill="#d0d4d4" text-anchor="middle">FX</text><text x="63.5" y="330" font-size="7.5" fill="#dce0e0" letter-spacing="-0.25">UR22mkII Input 2</text><circle cx="128" cy="327" r="4.8" fill="#9ea3a3" stroke="#c4c8c8" stroke-width="0.8"/><path d="M126 326 h4 l-2 2.5 z" fill="#dfe2e2"/><rect x="1" y="347" width="306" height="1" fill="#5f6464"/><rect x="307" y="108" width="13" height="461" fill="#2e2e2e"/><rect x="309" y="115" width="2.2" height="42" fill="#5e1c18"/><rect x="312.5" y="115" width="2.2" height="42" fill="#5e1c18"/></svg>
<!-- FX window -->
<div style="left:320px;top:85px;width:609px;height:424px;background:#f0f0f0"></div>
<div style="left:320px;top:85px;width:609px;height:33px;background:#fff"></div>
<span class="t" style="left:325px;top:90px;color:#999;font-size:8.5px;letter-spacing:-0.5px">FX: Track 1</span>
<span class="t" style="left:325px;top:107px;color:#666;font-size:8.5px;letter-spacing:-0.3px">FX</span>
<span class="t" style="left:343px;top:107px;color:#666;font-size:8.5px;letter-spacing:-0.3px">Edit</span>
<span class="t" style="left:366px;top:107px;color:#666;font-size:8.5px;letter-spacing:-0.3px">Options</span>
<svg style="position:absolute;left:883px;top:87px" width="12" height="14"><path d="M3.5 1.2h5M4.5 1.2v4.3M7.5 1.2v4.3M2.2 6.8 Q6 4.6 9.8 6.8 Z M6 7v5.5" stroke="#b0b0b0" stroke-width="0.9" fill="#e8e8e8"/></svg>
<div style="left:916px;top:90px;width:12px;height:12px;background:#e8e8e8"></div>
<!-- list -->
<div style="left:322px;top:120px;width:149px;height:357px;background:#fff;border:1px solid #adadad"></div>
<div class="cb on" style="left:327px;top:123px"></div>
<span class="t" style="left:340px;top:123px;color:#111">VST: ReaControlMIDI (Cockos)</span>
<div style="left:338px;top:134px;width:95px;height:10px;background:#eaeaea"></div>
<div class="cb on" style="left:327px;top:134px"></div>
<span class="t" style="left:340px;top:134px;color:#111">VSTi: ReaLearn (Helgoboss)</span>
<div class="btn" style="left:322px;top:479px;width:60px;height:15px"></div>
<span class="t" style="left:322px;top:496px;color:#333">0.0%</span>
<!-- right content -->
<div class="tb" style="left:474px;top:120px;width:438px;height:15px;border-color:#9a9a9a"></div>
<div class="btn" style="left:916px;top:121px;width:12px;height:13px;color:#777;line-height:15px">...</div>
<div class="dd" style="left:475px;top:138px;width:305px;height:14px;border-color:#c8c8c8">-</div>
<div class="btn" style="left:783px;top:139px;width:11px;height:12px;line-height:11px">+</div>
<div class="btn" style="left:797px;top:139px;width:29px;height:12px;line-height:11px">Param</div>
<div class="btn" style="left:830px;top:139px;width:48px;height:12px;line-height:11px">MIDI</div>
<div class="btn" style="left:882px;top:139px;width:16px;height:12px;line-height:11px">UI</div>
<svg style="position:absolute;left:901px;top:138px" width="13" height="13"><circle cx="6.5" cy="6.5" r="5.3" fill="#f4f4f4" stroke="#8a8a8a" stroke-width="0.9"/><path d="M6.8 6.8 L9.3 10.3" stroke="#555" stroke-width="1"/></svg>
<div class="cb on" style="left:915px;top:140px;width:10px;height:10px;border-color:#555"></div>

<div class="cb" style="left:518px;top:160px;border-color:#777"></div>
<span class="t" style="left:530px;top:160px">Let matched events through</span>
<div class="cb on" style="left:655px;top:160px;border-color:#777"></div>
<span class="t" style="left:667px;top:160px">Let unmatched events through</span>
<div class="cb on" style="left:803px;top:160px;border-color:#777"></div>
<span class="t" style="left:815px;top:160px">Auto-detect settings</span>

<span class="t" style="left:496px;top:178px">MIDI control input</span>
<div class="dd" style="left:571px;top:176px;width:168px;height:14px">&lt;FX input&gt;</div>
<div class="btn" style="left:796px;top:176px;width:90px;height:14px">Send feedback now</div>

<span class="t" style="left:496px;top:199px">MIDI feedback output</span>
<div class="dd" style="left:571px;top:197px;width:168px;height:14px">&lt;None&gt;</div>
<div class="cb on" style="left:778px;top:200px;border-color:#777"></div>
<span class="t" style="left:790px;top:200px">Send feedback only if track armed</span>

<div class="btn" style="left:482px;top:220px;width:80px;height:14px">Add mapping</div>
<div class="btn" style="left:583px;top:220px;width:66px;height:14px">Learn source filter</div>
<div class="btn" style="left:651px;top:220px;width:9px;height:14px;color:#aaa;background:#e4e4e4">X</div>
<div class="btn" style="left:663px;top:220px;width:65px;height:14px">Learn target filter</div>
<div class="btn" style="left:730px;top:220px;width:10px;height:14px;color:#aaa;background:#e4e4e4">X</div>
<div class="btn" style="left:759px;top:220px;width:80px;height:14px">Import from clipboard</div>
<div class="btn" style="left:842px;top:220px;width:80px;height:14px">Export to clipboard</div>

<div class="gb" style="left:482px;top:245px;width:430px;height:43px"></div>
<span class="t" style="left:486px;top:239px;background:#f0f0f0;padding:0 1px">1</span>
<div class="btn" style="left:488px;top:252px;width:25px;height:14px">Up</div>
<div class="btn" style="left:488px;top:269px;width:25px;height:14px">Down</div>
<span class="t" style="left:530px;top:250px;width:70px;text-align:center">CC value</span>
<span class="t" style="left:530px;top:259px;width:70px;text-align:center">Any channel</span>
<span class="t" style="left:530px;top:268px;width:70px;text-align:center">CC number 1</span>
<div class="cb on" style="left:613px;top:254px;border-color:#777"></div>
<span class="t" style="left:625px;top:254px">=&gt;</span>
<div class="cb on" style="left:613px;top:270px;border-color:#777"></div>
<span class="t" style="left:625px;top:270px">&lt;=</span>
<span class="t" style="left:680px;top:250px;width:76px;text-align:center">Track volume</span>
<span class="t" style="left:680px;top:259px;width:76px;text-align:center">Track &lt;Selected&gt;</span>
<div class="btn" style="left:804px;top:252px;width:31px;height:14px;border:1px solid #2f7fd0;box-shadow:inset 0 0 0 1px #7ab0e8">Edit</div>
<div class="btn" style="left:836px;top:252px;width:37px;height:14px">Duplicate</div>
<div class="btn" style="left:875px;top:252px;width:30px;height:14px">Remove</div>
<div class="btn" style="left:804px;top:269px;width:47px;height:14px">Learn source</div>
<div class="btn" style="left:852px;top:269px;width:53px;height:14px">Learn target</div>

<!-- VST window -->
<div style="left:944px;top:119px;width:243px;height:408px;background:#f0f0f0"></div>
<div style="left:944px;top:119px;width:243px;height:19px;background:#fff"></div>
<span class="t" style="left:949px;top:123px;color:#999;font-size:8.5px;letter-spacing:-0.3px">VST: ReaControlMIDI (Cockos) - Track 1 [1/2]</span>
<svg style="position:absolute;left:1141px;top:120px" width="12" height="14"><path d="M3.5 1.2h5M4.5 1.2v4.3M7.5 1.2v4.3M2.2 6.8 Q6 4.6 9.8 6.8 Z M6 7v5.5" stroke="#b0b0b0" stroke-width="0.9" fill="#e8e8e8"/></svg>
<div style="left:1174px;top:123px;width:12px;height:12px;background:#e8e8e8"></div>
<div class="dd" style="left:945px;top:140px;width:93px;height:14px">Default</div>
<div class="btn" style="left:1042px;top:141px;width:10px;height:12px;line-height:11px">+</div>
<div class="btn" style="left:1056px;top:141px;width:29px;height:12px;line-height:11px">Param</div>
<div class="btn" style="left:1088px;top:141px;width:49px;height:12px;line-height:11px">MIDI</div>
<div class="btn" style="left:1141px;top:141px;width:16px;height:12px;line-height:11px">UI</div>
<svg style="position:absolute;left:1159px;top:140px" width="14" height="14"><circle cx="7" cy="7" r="5.6" fill="#f4f4f4" stroke="#8a8a8a" stroke-width="0.9"/><path d="M7.3 7.3 L9.8 10.8" stroke="#555" stroke-width="1"/></svg>
<div class="cb on" style="left:1174px;top:142px;width:10px;height:10px;border-color:#555"></div>

<div class="gb" style="left:949px;top:165px;width:233px;height:297px"></div>
<span class="t" style="left:951px;top:159px;background:#f0f0f0;padding:0 1px">ReaControlMIDI</span>
<span class="t" style="left:951px;top:176px">MIDI channel:</span>
<div class="dd" style="left:1004px;top:173px;width:42px;height:14px">all</div>
<div class="btn" style="left:1058px;top:173px;width:53px;height:14px">All Notes Off</div>
<div class="btn" style="left:1124px;top:173px;width:53px;height:14px">Show Log</div>

<div class="gb" style="left:950px;top:201px;width:227px;height:78px"></div>
<span class="t" style="left:954px;top:196px;background:#f0f0f0;padding:0 1px">Bank/Program Select</span>
<div class="cb on" style="left:954px;top:211px;border-color:#777"></div>
<span class="t" style="left:965px;top:210px">Enable</span>
<span class="t" style="left:1128px;top:211px">MSB</span>
<span class="t" style="left:1156px;top:211px">LSB</span>
<span class="t" style="left:967px;top:225px">Bank:</span>
<div class="dd" style="left:992px;top:223px;width:129px;height:14px">&lt;user&gt;</div>
<div class="tb" style="left:1123px;top:223px;width:24px;height:14px;border-color:#888;font-size:8px;line-height:12px;text-align:right;padding-right:2px;color:#111">0</div>
<div class="tb" style="left:1150px;top:223px;width:24px;height:14px;border-color:#888;font-size:8px;line-height:12px;text-align:right;padding-right:2px;color:#111">0</div>
<span class="t" style="left:959px;top:243px">Program:</span>
<div class="dd" style="left:992px;top:240px;width:129px;height:14px"></div>
<div class="tb" style="left:1150px;top:240px;width:24px;height:14px;border-color:#888;font-size:8px;line-height:12px;text-align:right;padding-right:2px;color:#111">0</div>
<div style="left:955px;top:258px;width:163px;height:14px;background:#ececec;border:1px solid #d8d8d8;font-size:8px;letter-spacing:-0.37px;line-height:12px;text-align:center;color:#1a1a1a">GM.reabank</div>
<div class="btn" style="left:1129px;top:259px;width:45px;height:14px">Load File</div>

<div class="gb" style="left:950px;top:289px;width:227px;height:43px"></div>
<span class="t" style="left:954px;top:284px;background:#f0f0f0;padding:0 1px">Notes</span>
<span class="t" style="left:975px;top:298px">Transpose:</span>
<div class="tb" style="left:1023px;top:295px;width:25px;height:14px;border-color:#888;font-size:8px;line-height:12px;text-align:right;padding-right:2px;color:#111">0</div>
<span class="t" style="left:1056px;top:297px">semitones</span>
<div class="cb" style="left:954px;top:318px;border-color:#777"></div>
<span class="t" style="left:965px;top:317px">Snap to scale:</span>
<div class="dd" style="left:1023px;top:313px;width:26px;height:14px;background:#ccc;border-color:#ccc;color:#888">C</div>
<div class="btn" style="left:1055px;top:313px;width:114px;height:14px;background:#ccc;border-color:#ccc;color:#888">Major</div>

<div class="gb" style="left:950px;top:342px;width:227px;height:119px"></div>
<span class="t" style="left:954px;top:337px;background:#f0f0f0;padding:0 1px">Control Change</span>
<div class="cb on" style="left:954px;top:352px;border-color:#777"></div>
<span class="t" style="left:965px;top:351px">Enable</span>
<div class="cb on" style="left:1125px;top:352px;border-color:#777"></div>
<span class="t" style="left:1136px;top:351px">Raw mode</span>

<div class="dd" style="left:952px;top:367px;width:71px;height:14px;letter-spacing:-0.6px">CC 1 (Mod Whee</div>
<div style="left:1026px;top:367px;width:116px;height:14px;background:#e8e8e8"></div>
<div style="left:1081px;top:367px;width:13px;height:13px;border-radius:3px;background:linear-gradient(90deg,#ddd,#fafafa 50%,#ccc);border:1px solid #999"><div style="left:3px;top:2px;width:1px;height:7px;background:#999"></div><div style="left:7px;top:2px;width:1px;height:7px;background:#999"></div></div>
<div class="tb" style="left:1146px;top:366px;width:28px;height:15px;border-color:#888;font-size:8px;line-height:11px;padding-left:2px;color:#111">67</div>

<div class="dd" style="left:952px;top:386px;width:71px;height:14px">CC 2 (Breath)</div>
<div style="left:1026px;top:386px;width:116px;height:14px;background:#e8e8e8"></div>
<div style="left:1027px;top:386px;width:13px;height:13px;border-radius:3px;background:linear-gradient(90deg,#ddd,#fafafa 50%,#ccc);border:1px solid #999"><div style="left:3px;top:2px;width:1px;height:7px;background:#999"></div><div style="left:7px;top:2px;width:1px;height:7px;background:#999"></div></div>
<div style="left:1083px;top:388px;width:1px;height:10px;background:#555"></div>
<div class="tb" style="left:1146px;top:385px;width:28px;height:15px;border-color:#888;font-size:8px;line-height:11px;padding-left:2px;color:#111">0</div>

<div class="dd" style="left:952px;top:404px;width:71px;height:14px">CC 3</div>
<div style="left:1026px;top:404px;width:116px;height:14px;background:#e8e8e8"></div>
<div style="left:1027px;top:404px;width:13px;height:13px;border-radius:3px;background:linear-gradient(90deg,#ddd,#fafafa 50%,#ccc);border:1px solid #999"><div style="left:3px;top:2px;width:1px;height:7px;background:#999"></div><div style="left:7px;top:2px;width:1px;height:7px;background:#999"></div></div>
<div style="left:1083px;top:406px;width:1px;height:10px;background:#555"></div>
<div class="tb" style="left:1146px;top:403px;width:28px;height:15px;border-color:#888;font-size:8px;line-height:11px;padding-left:2px;color:#111">0</div>

<div class="dd" style="left:952px;top:423px;width:71px;height:14px">&lt;none&gt;</div>
<div style="left:1026px;top:423px;width:116px;height:14px;background:#e8e8e8"></div>
<div style="left:1027px;top:423px;width:13px;height:13px;border-radius:3px;background:linear-gradient(90deg,#ddd,#fafafa 50%,#ccc);border:1px solid #999"><div style="left:3px;top:2px;width:1px;height:7px;background:#999"></div><div style="left:7px;top:2px;width:1px;height:7px;background:#999"></div></div>
<div style="left:1083px;top:425px;width:1px;height:10px;background:#555"></div>
<div class="tb" style="left:1146px;top:422px;width:28px;height:15px;border-color:#888"></div>

<div class="dd" style="left:952px;top:442px;width:71px;height:14px">&lt;none&gt;</div>
<div style="left:1026px;top:442px;width:116px;height:14px;background:#e8e8e8"></div>
<div style="left:1027px;top:442px;width:13px;height:13px;border-radius:3px;background:linear-gradient(90deg,#ddd,#fafafa 50%,#ccc);border:1px solid #999"><div style="left:3px;top:2px;width:1px;height:7px;background:#999"></div><div style="left:7px;top:2px;width:1px;height:7px;background:#999"></div></div>
<div style="left:1083px;top:444px;width:1px;height:10px;background:#555"></div>
<div class="tb" style="left:1146px;top:441px;width:28px;height:15px;border-color:#888"></div>

<div class="gb" style="left:950px;top:471px;width:227px;height:44px"></div>
<span class="t" style="left:954px;top:466px;background:#f0f0f0;padding:0 1px">Sysex</span>
<span class="t" style="left:954px;top:481px">F0</span>
<div style="left:968px;top:479px;width:193px;height:15px;background:#f0f0f0;border:1px solid #999"></div>
<span class="t" style="left:1165px;top:479px">F7</span>
<div class="btn" style="left:957px;top:498px;width:34px;height:13px;line-height:11px">Edit</div>
<div class="btn" style="left:999px;top:498px;width:34px;height:13px;line-height:11px">Re-send</div>
<div class="cb" style="left:1041px;top:501px;border-color:#777"></div>
<span class="t" style="left:1052px;top:500px;letter-spacing:-0.44px">Always send sysex on playback start</span>

<!-- Edit mapping dialog -->
<div style="left:333px;top:301px;width:458px;height:268px;background:#f0f0f0;border:1px solid #8c8c8c;border-bottom:none"></div>
<div style="left:334px;top:302px;width:456px;height:16px;background:#fff"></div>
<span class="t" style="left:336px;top:305px;font-size:8.5px;letter-spacing:-0.3px;color:#222">Edit mapping "1"</span>
<svg style="position:absolute;left:775px;top:305px" width="10" height="10"><path d="M1 1L9 9M9 1L1 9" stroke="#333" stroke-width="1"/></svg>

<div class="gb" style="left:342px;top:331px;width:440px;height:40px"></div>
<span class="t" style="left:346px;top:326px;background:#f0f0f0;padding:0 2px">Mapping</span>
<span class="t" style="left:346px;top:346px">Name</span>
<div class="tb" style="left:374px;top:343px;width:200px;height:16px;border-color:#8a8a8a"></div>
<span class="t" style="left:377px;top:346px">1</span>
<div class="cb on" style="left:592px;top:338px;border-color:#777"></div>
<span class="t" style="left:603px;top:338px">=&gt; Control enabled</span>
<div class="cb on" style="left:592px;top:355px;border-color:#777"></div>
<span class="t" style="left:603px;top:355px">&lt;= Feedback enabled</span>
<div class="btn" style="left:692px;top:344px;width:82px;height:15px;border:1px solid #2f7fd0;box-shadow:inset 0 0 0 1px #8ab8e8;line-height:13px">Find in mapping list</div>

<div class="gb" style="left:342px;top:377px;width:166px;height:153px"></div>
<span class="t" style="left:346px;top:372px;background:#f0f0f0;padding:0 2px">Source</span>
<div class="btn" style="left:347px;top:384px;width:156px;height:14px">Learn</div>
<span class="t" style="left:346px;top:404px">Type</span>
<div class="dd" style="left:383px;top:403px;width:121px;height:14px">CC value</div>
<span class="t" style="left:346px;top:426px">Channel</span>
<div class="dd" style="left:383px;top:424px;width:121px;height:14px">&lt;Any&gt; (no feedback)</div>
<span class="t" style="left:346px;top:447px">CC</span>
<div class="dd" style="left:419px;top:446px;width:85px;height:14px">1</div>
<span class="t" style="left:346px;top:469px">Character</span>
<div class="dd" style="left:383px;top:466px;width:121px;height:14px">Knob/Fader</div>
<div class="cb" style="left:381px;top:489px;border-color:#777"></div>
<span class="t" style="left:392px;top:488px">14-bit values</span>

<div class="gb" style="left:514px;top:377px;width:267px;height:153px"></div>
<span class="t" style="left:518px;top:372px;background:#f0f0f0;padding:0 2px">Target</span>
<div class="btn" style="left:517px;top:384px;width:121px;height:14px">Learn</div>
<div class="btn" style="left:644px;top:384px;width:130px;height:14px">Go there</div>
<span class="t" style="left:518px;top:405px">Type</span>
<div class="dd" style="left:557px;top:403px;width:217px;height:14px">Track volume</div>
<span class="t" style="left:518px;top:426px">Track</span>
<div class="dd" style="left:557px;top:424px;width:217px;height:14px">&lt;Selected&gt;</div>
<div class="cb" style="left:518px;top:491px;border-color:#777"></div>
<span class="t" style="left:529px;top:490px">Track must be selected</span>
<span class="t" style="left:519px;top:511px">Value</span>
<div style="left:557px;top:514px;width:64px;height:3px;background:#e6e6e6;border:1px solid #ddd"></div>
<div style="left:587px;top:509px;width:6px;height:14px;background:#0a72d8"></div>
<div class="tb" style="left:626px;top:508px;width:31px;height:15px;border-color:#777"></div>
<span class="t" style="left:627px;top:510px">-9.49</span>
<span class="t" style="left:659px;top:511px">dB</span>

<div class="gb" style="left:342px;top:537px;width:440px;height:40px"></div>
<span class="t" style="left:346px;top:532px;background:#f0f0f0;padding:0 2px">Mode</span>
<div class="btn" style="left:346px;top:543px;width:429px;height:15px;line-height:13px">Reset to defaults</div>
<span class="t" style="left:346px;top:564px">Type</span>
<div class="dd" style="left:377px;top:563px;width:151px;height:14px">Absolute</div>

</body></html>
